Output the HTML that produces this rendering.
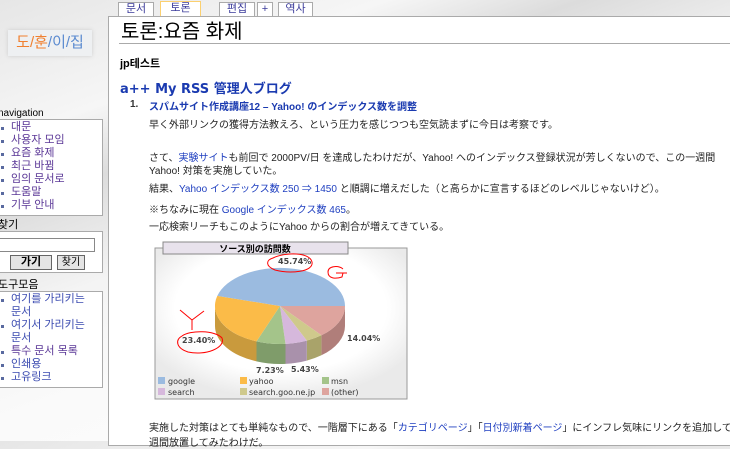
<!DOCTYPE html>
<html><head><meta charset="utf-8"><style>
*{margin:0;padding:0;box-sizing:border-box}
body{width:730px;height:441px;overflow:hidden;position:relative;font-family:"Liberation Sans","Noto Sans CJK KR","Noto Sans CJK JP",sans-serif;font-size:11px;color:#000;background:linear-gradient(160deg,#e6e6e6 0%,#f6f6f6 20%,#dcdcdc 30%,#f4f4f4 45%,#fafafa 60%,#fff 100%)}
.a{position:absolute;white-space:nowrap}
.tab{position:absolute;top:2px;height:15px;background:#fff;border:1px solid #aaa;border-bottom:none;font-size:11px;color:#3a3a9a;text-align:center;line-height:13px}
.box{position:absolute;left:-2px;width:105px;background:#fff;border:1px solid #aaa}
.box div{font-size:11px;color:#5a3696;line-height:13px;padding-left:12px;position:relative}
.box div:before{content:"";position:absolute;left:2px;top:6px;width:3px;height:3px;background:#5a6aa0}
.box div.c{color:#3a4ab0}
.box div.n:before{display:none}
.jp{font-family:"Liberation Sans","Noto Sans CJK JP",sans-serif;font-size:10px;color:#222}
a{color:#2040c0;text-decoration:none}
</style></head><body>
<div class="a" style="left:8px;top:30px;width:84px;height:26px;background:#eef0f2;box-shadow:0 0 4px #ccc;font-size:15px;line-height:26px;text-align:center;color:#f08030">도/<span style="color:#f08030">훈</span><span style="color:#5a8ad0">/이/집</span></div>
<div class="tab" style="left:118px;width:36px">문서</div>
<div class="tab" style="left:160px;width:41px;border-color:#fbd070;top:1px;height:16px">토론</div>
<div class="tab" style="left:219px;width:36px">편집</div>
<div class="tab" style="left:257px;width:16px">+</div>
<div class="tab" style="left:278px;width:35px">역사</div>
<div class="a" style="left:108px;top:16px;width:640px;height:430px;background:#fff;border:1px solid #aaa;border-right:none"></div>
<div class="a" style="left:121px;top:19px;font-size:20px;line-height:26px">토론:요즘 화제</div>
<div class="a" style="left:119px;top:43px;width:611px;height:1px;background:#aaa"></div>
<div class="a" style="left:120px;top:55px;font-size:11px;font-weight:bold">jp테스트</div>
<div class="a" style="left:120px;top:78px;font-size:13px;font-weight:bold;color:#1a3ab0;font-family:'DejaVu Sans','Noto Sans CJK JP',sans-serif">a++ My RSS 管理人ブログ</div>
<div class="a" style="left:130px;top:99px;font-size:10px;font-weight:bold;color:#333">1.</div>
<div class="a jp" style="left:149px;top:98px;font-weight:bold;color:#1a3ab0">スパムサイト作成講座12 – Yahoo! のインデックス数を調整</div>
<div class="a jp" style="left:149px;top:116px">早く外部リンクの獲得方法教えろ、という圧力を感じつつも空気読まずに今日は考察です。</div>
<div class="a jp" style="left:149px;top:149px">さて、<a>実験サイト</a>も前回で 2000PV/日 を達成したわけだが、Yahoo! へのインデックス登録状況が芳しくないので、この一週間</div>
<div class="a jp" style="left:149px;top:162px">Yahoo! 対策を実施していた。</div>
<div class="a jp" style="left:149px;top:180px">結果、<a>Yahoo インデックス数 250 ⇒ 1450</a> と順調に増えだした（と高らかに宣言するほどのレベルじゃないけど）。</div>
<div class="a jp" style="left:149px;top:201px">※ちなみに現在 <a>Google インデックス数 465</a>。</div>
<div class="a jp" style="left:149px;top:218px">一応検索リーチもこのようにYahoo からの割合が増えてきている。</div>
<div class="a jp" style="left:149px;top:419px">実施した対策はとても単純なもので、一階層下にある「<a>カテゴリページ</a>」「<a>日付別新着ページ</a>」にインフレ気味にリンクを追加して一</div>
<div class="a jp" style="left:149px;top:434px">週間放置してみたわけだ。</div>
<svg class="a" style="left:140px;top:235px" width="280" height="170" viewBox="140 235 280 170">
<defs><radialGradient id="rg" cx="0.5" cy="0.4" r="0.6"><stop offset="0.7" stop-color="#fff"/><stop offset="1" stop-color="#eaeaea"/></radialGradient></defs>
<rect x="155" y="248" width="252" height="151" fill="url(#rg)" stroke="#999"/>
<rect x="163" y="242" width="185" height="12" fill="#e8e2ec" stroke="#888"/>
<text x="255" y="252" font-size="9" font-weight="bold" text-anchor="middle" font-family="Noto Sans CJK JP,sans-serif">ソース別の訪問数</text>
<path d="M345,306 A65,38 0 0 1 321.4,335.3 L321.4,355.3 A65,38 0 0 0 345,326Z" fill="#b07e7a"/>
<path d="M321.4,335.3 A65,38 0 0 1 306.8,340.6 L306.8,360.6 A65,38 0 0 0 321.4,355.3Z" fill="#a9a36a"/>
<path d="M306.8,340.6 A65,38 0 0 1 285.5,343.9 L285.5,363.9 A65,38 0 0 0 306.8,360.6Z" fill="#a991ab"/>
<path d="M285.5,343.9 A65,38 0 0 1 256.5,341.4 L256.5,361.4 A65,38 0 0 0 285.5,363.9Z" fill="#7f9c6a"/>
<path d="M256.5,341.4 A65,38 0 0 1 215,306 L215,326 A65,38 0 0 0 256.5,361.4Z" fill="#c99a3d"/>
<path d="M280,306 L345,306 A65,38 0 0 1 321.4,335.3Z" fill="#dea49e"/>
<path d="M280,306 L321.4,335.3 A65,38 0 0 1 306.8,340.6Z" fill="#cfc98c"/>
<path d="M280,306 L306.8,340.6 A65,38 0 0 1 285.5,343.9Z" fill="#d6b8dc"/>
<path d="M280,306 L285.5,343.9 A65,38 0 0 1 256.5,341.4Z" fill="#a4c48a"/>
<path d="M280,306 L256.5,341.4 A65,38 0 0 1 217.3,295.9Z" fill="#fbbb48"/>
<path d="M280,306 L217.3,295.9 A65,38 0 0 1 345,306Z" fill="#9bbbe0"/>
<g font-size="8" font-weight="bold" fill="#444" font-family="DejaVu Sans,sans-serif">
<text x="278" y="264">45.74%</text><text x="182" y="343">23.40%</text><text x="347" y="341">14.04%</text><text x="256" y="373">7.23%</text><text x="291" y="372">5.43%</text>
</g>
<g fill="none" stroke="#f00" stroke-width="1">
<path d="M273,258 C285,252 310,252 312,262 C314,272 290,274 275,270 C265,266 266,260 273,258Z"/>
<path d="M182,336 C190,330 215,330 222,338 C226,348 205,356 188,352 C176,348 175,340 182,336Z"/>
<path d="M343,269 C338,265 328,266 328,272 C328,279 336,279 342,277 L343,273 M336,273 L347,273"/>
<path d="M180,310 L192,320 L204,311 M192,320 L192,330"/>
</g>
<g font-size="8" fill="#333" font-family="DejaVu Sans,sans-serif">
<rect x="158" y="377" width="7" height="7" fill="#9bbbe0"/><text x="168" y="384">google</text>
<rect x="240" y="377" width="7" height="7" fill="#fbbb48"/><text x="249" y="384">yahoo</text>
<rect x="322" y="377" width="7" height="7" fill="#a4c48a"/><text x="331" y="384">msn</text>
<rect x="158" y="388" width="7" height="7" fill="#d6b8dc"/><text x="168" y="395">search</text>
<rect x="240" y="388" width="7" height="7" fill="#cfc98c"/><text x="249" y="395">search.goo.ne.jp</text>
<rect x="322" y="388" width="7" height="7" fill="#dea49e"/><text x="331" y="395">(other)</text>
</g>
</svg>
<div class="a" style="left:-2px;top:108px;font-size:10px">navigation</div>
<div class="box" style="top:119px;padding:1px 0 3px">
<div>대문</div><div>사용자 모임</div><div>요즘 화제</div><div>최근 바뀜</div><div>임의 문서로</div><div>도움말</div><div>기부 안내</div></div>
<div class="a" style="left:-2px;top:216px;font-size:11px">찾기</div>
<div class="box" style="top:231px;height:42px">
<span class="a" style="left:0;top:6px;width:96px;height:14px;border:1px solid #888;background:#fff"></span>
<span class="a" style="left:11px;top:23px;width:42px;height:15px;border:1px solid #666;background:#e4e4e4;font-weight:bold;font-size:11px;text-align:center;line-height:13px">가기</span>
<span class="a" style="left:58px;top:23px;width:28px;height:15px;border:1px solid #666;background:#e4e4e4;font-size:10px;text-align:center;line-height:13px">찾기</span>
</div>
<div class="a" style="left:-2px;top:276px;font-size:11px">도구모음</div>
<div class="box" style="top:291px;padding:1px 0 3px">
<div class="c">여기를 가리키는</div><div class="c n">문서</div><div class="c">여기서 가리키는</div><div class="c n">문서</div><div>특수 문서 목록</div><div class="c">인쇄용</div><div class="c">고유링크</div></div>
</body></html>
